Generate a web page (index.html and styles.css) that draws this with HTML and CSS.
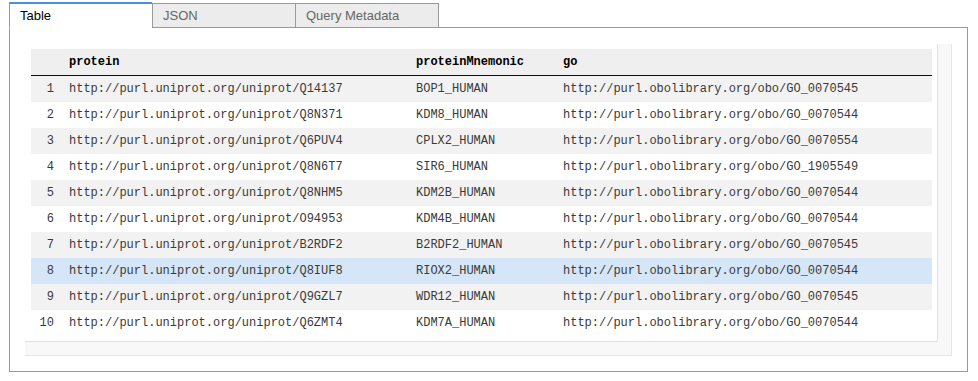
FILE: index.html
```html
<!DOCTYPE html>
<html lang="en">
<head>
    <meta charset="UTF-8">
    <title>Query Results</title>
    <link rel="stylesheet" href="styles.css">
</head>
<body>
    <div class="tab-bar">
        <div class="tab active">Table</div>
        <div class="tab">JSON</div>
        <div class="tab last">Query Metadata</div>
        <div class="tab-fill"></div>
    </div>

    <div class="panel">
        <div class="scroll">
            <div class="viewport">
                <table class="results">
                    <colgroup>
                        <col class="col-idx">
                        <col class="col-protein">
                        <col class="col-mnemonic">
                        <col class="col-go">
                    </colgroup>
                    <thead>
                        <tr>
                            <th></th>
                            <th>protein</th>
                            <th>proteinMnemonic</th>
                            <th>go</th>
                        </tr>
                    </thead>
                    <tbody>
                        <tr><td class="idx">1</td><td>http://purl.uniprot.org/uniprot/Q14137</td><td>BOP1_HUMAN</td><td>http://purl.obolibrary.org/obo/GO_0070545</td></tr>
                        <tr><td class="idx">2</td><td>http://purl.uniprot.org/uniprot/Q8N371</td><td>KDM8_HUMAN</td><td>http://purl.obolibrary.org/obo/GO_0070544</td></tr>
                        <tr><td class="idx">3</td><td>http://purl.uniprot.org/uniprot/Q6PUV4</td><td>CPLX2_HUMAN</td><td>http://purl.obolibrary.org/obo/GO_0070554</td></tr>
                        <tr><td class="idx">4</td><td>http://purl.uniprot.org/uniprot/Q8N6T7</td><td>SIR6_HUMAN</td><td>http://purl.obolibrary.org/obo/GO_1905549</td></tr>
                        <tr><td class="idx">5</td><td>http://purl.uniprot.org/uniprot/Q8NHM5</td><td>KDM2B_HUMAN</td><td>http://purl.obolibrary.org/obo/GO_0070544</td></tr>
                        <tr><td class="idx">6</td><td>http://purl.uniprot.org/uniprot/O94953</td><td>KDM4B_HUMAN</td><td>http://purl.obolibrary.org/obo/GO_0070544</td></tr>
                        <tr><td class="idx">7</td><td>http://purl.uniprot.org/uniprot/B2RDF2</td><td>B2RDF2_HUMAN</td><td>http://purl.obolibrary.org/obo/GO_0070545</td></tr>
                        <tr class="hover"><td class="idx">8</td><td>http://purl.uniprot.org/uniprot/Q8IUF8</td><td>RIOX2_HUMAN</td><td>http://purl.obolibrary.org/obo/GO_0070544</td></tr>
                        <tr><td class="idx">9</td><td>http://purl.uniprot.org/uniprot/Q9GZL7</td><td>WDR12_HUMAN</td><td>http://purl.obolibrary.org/obo/GO_0070545</td></tr>
                        <tr><td class="idx">10</td><td>http://purl.uniprot.org/uniprot/Q6ZMT4</td><td>KDM7A_HUMAN</td><td>http://purl.obolibrary.org/obo/GO_0070544</td></tr>
                    </tbody>
                </table>
            </div>
        </div>
    </div>
</body>
</html>
```

FILE: styles.css
```css
body { margin: 0; padding: 2px 0 0 9px; font-family: "Liberation Sans", Arial, sans-serif; background: #fff; }

.tab-bar { display: flex; align-items: flex-end; width: 959px; }
.tab { box-sizing: border-box; width: 143px; height: 25px; padding-left: 10px; line-height: 23px; font-size: 13px; color: #666; background: #ececec; border-top: 1px solid #999; border-left: 1px solid #999; border-bottom: 1px solid #999; }
.tab.last { width: 144px; border-right: 1px solid #999; }
.tab.active { height: 26px; color: #000; background: #fff; border-top: 2px solid #4a8fe0; border-bottom: 1px solid #fff; }
.tab-fill { flex: 1; border-bottom: 1px solid #999; }

.panel { box-sizing: border-box; width: 959px; padding: 16px 15px 15px 15px; border: 1px solid #999; border-top: none; }

.scroll { background: #f8f8f8; border-right: 1px solid #e6e6e6; border-bottom: 1px solid #e6e6e6; padding: 0 13px 13px 0; }
.viewport { background: #fff; border-right: 1px solid #e0e0e0; border-bottom: 1px solid #e0e0e0; padding: 5px 5px 5px 6px; }

.results { width: 901px; table-layout: fixed; border-collapse: separate; border-spacing: 0; font-family: "Liberation Mono", "Courier New", monospace; font-size: 12px; }
.col-idx { width: 31px; }
.col-protein { width: 347px; }
.col-mnemonic { width: 147px; }
.col-go { width: 376px; }

.results th { height: 26px; padding: 0 7px; line-height: 26px; text-align: left; font-weight: bold; color: #000; background: #efefef; border-bottom: 1px solid #111; white-space: nowrap; }
.results td { height: 26px; padding: 0 7px; line-height: 26px; color: #3a3a3a; white-space: nowrap; }
.results td.idx { padding: 0 8px 0 0; text-align: right; }
.results tbody tr:nth-child(odd) td { background: #f2f2f2; }
.results tbody tr.hover td { background: #d5e6f8; }
```
